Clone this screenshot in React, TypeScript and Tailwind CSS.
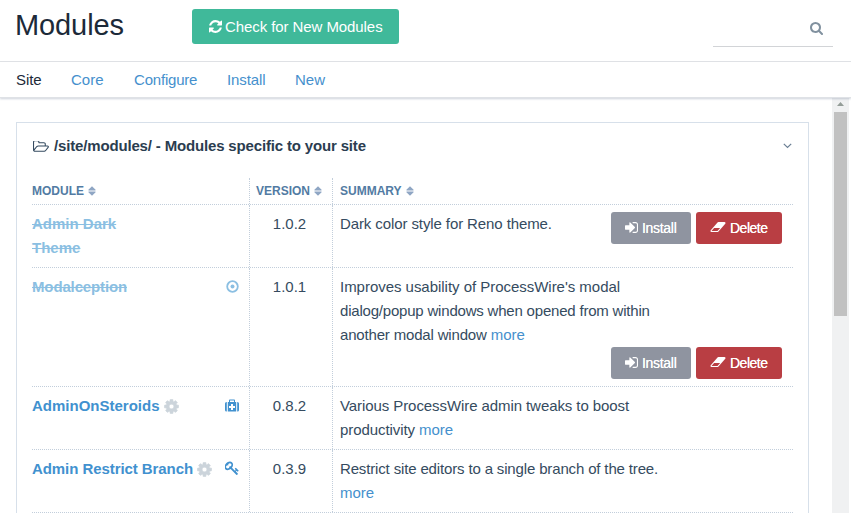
import React from "react";

type IconProps = { className?: string };

const RefreshIcon = ({ className }: IconProps) => (
  <svg viewBox="128 128 1536 1536" className={className} fill="currentColor">
    <path d="M1639 1056q0 5-1 7-64 268-268 434.5t-478 166.5q-146 0-282.5-55t-243.5-157l-129 129q-19 19-45 19t-45-19-19-45v-448q0-26 19-45t45-19h448q26 0 45 19t19 45-19 45l-137 137q71 66 161 102t187 36q134 0 250-65t186-179q11-17 53-117 8-23 30-23h192q13 0 22.5 9.5t9.5 22.5zm25-800v448q0 26-19 45t-45 19h-448q-26 0-45-19t-19-45 19-45l138-138q-148-137-349-137-134 0-250 65t-186 179q-11 17-53 117-8 23-30 23h-199q-13 0-22.5-9.5t-9.5-22.5v-7q65-268 270-434.5t480-166.5q146 0 284 55.5t245 156.5l130-129q19-19 45-19t45 19 19 45z" />
  </svg>
);

const SearchIcon = ({ className }: IconProps) => (
  <svg viewBox="64 128 1664 1664" className={className} fill="currentColor">
    <path d="M1216 832q0-185-131.5-316.5t-316.5-131.5-316.5 131.5-131.5 316.5 131.5 316.5 316.5 131.5 316.5-131.5 131.5-316.5zm512 832q0 52-38 90t-90 38q-54 0-90-38l-343-342q-179 124-399 124-143 0-273.5-55.5t-225-150-150-225-55.5-273.5 55.5-273.5 150-225 225-150 273.5-55.5 273.5 55.5 225 150 150 225 55.5 273.5q0 220-124 399l343 343q37 37 37 90z" />
  </svg>
);

const GearIcon = () => (
  <svg viewBox="80 80 1632 1632" className="mt-px size-[15px] text-[#ccd4db]" fill="currentColor" stroke="currentColor" strokeWidth="70">
    <path d="M1152 896q0-106-75-181t-181-75-181 75-75 181 75 181 181 75 181-75 75-181zm512-109v222q0 12-8 23t-20 13l-185 28q-19 54-39 91 35 50 107 138 10 12 10 25t-9 23q-27 37-99 108t-94 71q-12 0-26-9l-138-108q-44 23-91 38-16 136-29 186-7 28-36 28h-222q-14 0-24.5-8.5t-11.5-21.5l-28-184q-49-16-90-37l-141 107q-10 9-25 9-14 0-25-11-126-114-165-168-7-10-7-23 0-12 8-23 15-21 51-66.5t54-70.5q-27-50-41-99l-183-27q-13-2-21-12.5t-8-23.5v-222q0-12 8-23t19-13l186-28q14-46 39-92-40-57-107-138-10-12-10-24 0-10 9-23 26-36 98.5-107.5t94.5-71.5q13 0 26 10l138 107q44-23 91-38 16-136 29-186 7-28 36-28h222q14 0 24.5 8.5t11.5 21.5l28 184q49 16 90 37l142-107q9-9 24-9 13 0 25 10 129 119 165 170 7 8 7 22 0 12-8 23-15 21-51 66.5t-54 70.5q26 50 41 98l183 28q13 2 21 12.5t8 23.5z" />
  </svg>
);

const FolderIcon = ({ className }: IconProps) => (
  <svg viewBox="64 256 1920 1280" className={className} fill="currentColor">
    <path d="M1845 931q0-35-53-35h-1088q-40 0-85.5 21.5t-71.5 52.5l-294 363q-18 24-18 40 0 35 53 35h1088q40 0 86-22t71-53l294-363q18-22 18-39zm-1141-163h768v-160q0-40-28-68t-68-28h-576q-40 0-68-28t-28-68v-64q0-40-28-68t-68-28h-320q-40 0-68 28t-28 68v853l256-315q44-53 116-87.5t140-34.5zm1269 163q0 62-46 120l-295 363q-43 53-116 87.5t-140 34.5h-1088q-92 0-158-66t-66-158v-960q0-92 66-158t158-66h320q92 0 158 66t66 158v32h544q92 0 158 66t66 158v160h192q54 0 99 24.5t67 70.5q15 32 15 68z" />
  </svg>
);

const SignInIcon = ({ className }: IconProps) => (
  <svg viewBox="128 256 1536 1280" className={className} fill="currentColor">
    <path d="M1312 896q0 26-19 45l-544 544q-19 19-45 19t-45-19-19-45v-288h-448q-26 0-45-19t-19-45v-384q0-26 19-45t45-19h448v-288q0-26 19-45t45-19 45 19l544 544q19 19 19 45zm352-352v704q0 119-84.5 203.5t-203.5 84.5h-320q-13 0-22.5-9.5t-9.5-22.5q0-4-1-20t-.5-26.5 3-23.5 10-19.5 20.5-6.5h320q66 0 113-47t47-113v-704q0-66-47-113t-113-47h-312l-11.5-1-11.5-3-8-5.5-7-9-2-13.5q0-4-1-20t-.5-26.5 3-23.5 10-19.5 20.5-6.5h320q119 0 203.5 84.5t84.5 203.5z" />
  </svg>
);

const EraserIcon = ({ className }: IconProps) => (
  <svg viewBox="64 256 1920 1280" className={className} fill="currentColor">
    <path d="M960 1408l336-384h-768l-336 384h768zm1013-1077q15 34 9.5 71.5t-30.5 65.5l-896 1024q-38 44-96 44h-768q-38 0-69.5-20.5t-47.5-54.5q-15-34-9.5-71.5t30.5-65.5l896-1024q38-44 96-44h768q38 0 69.5 20.5t47.5 54.5z" />
  </svg>
);

const SortIcon = () => (
  <svg viewBox="0 0 8 10" className="h-[10px] w-2 text-[#8fa6c4]" fill="currentColor">
    <path d="M4 0.3 7.6 3.7q.4.8-.5.8H.9Q0 4.500.4 3.700ZM4 9.700.4 6.300Q0 5.500.9 5.500h6.200q.9 0 .5.8Z" />
  </svg>
);

const DotCircleIcon = () => (
  <svg viewBox="0 0 13 13" className="mb-0.5 size-[13px]" fill="none">
    <circle cx="6.500" cy="6.500" r="5.300" stroke="currentColor" strokeWidth="1.800" />
    <circle cx="6.500" cy="6.500" r="2" fill="currentColor" />
  </svg>
);

const MedkitIcon = () => (
  <svg viewBox="0 0 14 13" className="mb-0.5 h-[13px] w-[14px]">
    <path d="M1.800 3v9.500H1.500A1.500 1.500 0 0 1 0 11V4.500A1.500 1.500 0 0 1 1.500 3ZM12.200 3v9.500h.3A1.500 1.500 0 0 0 14 11V4.500A1.500 1.500 0 0 0 12.500 3Z" fill="currentColor" />
    <path d="M2.800 3H4V1.300Q4 .5 4.800.5h4.400q.8 0 .8.8V3h1.200v9.500H2.800ZM5 3h4V1.500H5Z" fill="currentColor" fillRule="evenodd" />
    <path d="M6 5h2v2h2v2H8v2H6V9H4V7h2Z" fill="white" />
  </svg>
);

const KeyIcon = () => (
  <svg viewBox="64 64 1664 1664" className="mb-0.5 size-[14px]" fill="currentColor">
    <path d="M832 512q0-80-56-136t-136-56-136 56-56 136q0 42 19 83-41-19-83-19-80 0-136 56t-56 136 56 136 136 56 136-56 56-136q0-42-19-83 41 19 83 19 80 0 136-56t56-136zm851 704q0 17-49 66t-66 49q-9 0-28.5-16t-36.5-33-38.5-40-24.5-26l-96 96 220 220q28 28 28 68 0 42-39 81t-81 39q-40 0-68-28l-671-671q-176 131-365 131-163 0-265.500-102.500t-102.500-265.500q0-160 95-313t248-248 313-95q163 0 265.500 102.500t102.500 265.500q0 189-131 365l355 355 96-96q-3-3-26-24.500t-40-38.500-33-36.500-16-28.500q0-17 49-66t66-49q13 0 23 10 6 6 46 44.500t82 79.500 86.500 86 73 78 28.500 41z" />
  </svg>
);

const Actions = () => (
  <div className="flex shrink-0 gap-[5px] text-[14px] leading-8 text-white">
    <button className="flex h-8 w-20 items-center rounded-[3px] bg-[#8f94a0] pl-[14px]">
      <SignInIcon className="mr-[4px] mb-0.5 h-[11px] w-[13px]" />
      <span className="whitespace-nowrap tracking-[-0.3px] [text-shadow:0_0_0.5px_white]">Install</span>
    </button>
    <button className="flex h-8 w-[86px] items-center rounded-[3px] bg-[#b93e43] pl-[14px]">
      <EraserIcon className="mr-[4px] mb-0.5 h-[10px] w-[16px]" />
      <span className="whitespace-nowrap tracking-[-0.5px] [text-shadow:0_0_0.5px_white]">Delete</span>
    </button>
  </div>
);

const Row = ({ name, icon, version, children, height }: {
  name: React.ReactNode;
  icon?: React.ReactNode;
  version: string;
  children: React.ReactNode;
  height: string;
}) => (
  <div className={`grid grid-cols-[217px_83px_461px] border-b border-dotted border-[#c2cedb] ${height}`}>
    <div className="flex justify-between pt-[7px] pr-[10px] font-bold text-[#4191cf]">
      <div className="whitespace-nowrap">{name}</div>
      {icon && <div className="flex h-6 items-center">{icon}</div>}
    </div>
    <div className="border-l border-dotted border-[#c2cedb] pt-[7px] pr-[3px] text-center">{version}</div>
    <div className="border-l border-dotted border-[#c2cedb] pt-[7px] pr-[11px] pl-[7px]">{children}</div>
  </div>
);

const Line = ({ children, more, className = "" }: { children?: React.ReactNode; more?: boolean; className?: string }) => (
  <div className={`flex h-6 gap-1 whitespace-nowrap ${className}`}>
    {children && <span>{children}</span>}
    {more && <a className="tracking-normal text-[#4590cd]">more</a>}
  </div>
);

export default function App() {
  return (
    <div className="flex h-[513px] w-[851px] flex-col overflow-hidden bg-white text-[15px] leading-6 text-[#354b60] [font-family:'Liberation_Sans',Arial,sans-serif]">
      <header className="flex h-[62px] w-full shrink-0 items-start border-b border-[#e2e4e7] pr-[18px] pl-[15px]">
        <h1 className="mt-[6px] w-[177px] text-[29px] leading-[38px] tracking-[-0.1px] text-[#1c2a39]">Modules</h1>
        <button className="mt-[9px] flex h-[35px] w-[207px] items-center rounded-[3px] bg-[#40b99a] pl-[17px] text-white">
          <RefreshIcon className="mr-[3px] size-[13px]" />
          <span className="whitespace-nowrap tracking-[-0.08px]">Check for New Modules</span>
        </button>
        <div className="mt-[9px] ml-auto flex h-[38px] w-[120px] items-center justify-end border-b border-[#d2d4d7] pr-[10px] text-[#81919f]">
          <SearchIcon className="mt-0.5 size-[13px]" />
        </div>
      </header>
      <nav className="relative z-10 flex h-9 shrink-0 items-center border-b border-[#dfe2e6] pl-4 text-[#4590cd] shadow-[0_1px_2px_rgba(60,80,110,0.25)]">
        <a className="w-[55px] tracking-[-0.1px] text-[#1c2a39]">Site</a>
        <a className="w-[63px]">Core</a>
        <a className="w-[93px] tracking-[-0.2px]">Configure</a>
        <a className="w-[68px] tracking-[-0.1px]">Install</a>
        <a>New</a>
      </nav>
      <div className="flex min-h-0 flex-1">
        <main className="w-[832px] shrink-0 overflow-hidden pt-6 pl-4">
          <section className="h-[450px] w-[793px] border border-[#d7e0ea] px-[15px]">
            <div className="flex h-[55px] items-center pb-[9px] pl-px">
              <FolderIcon className="mt-px mr-[5px] h-[11px] w-4 text-[#354b60]" />
              <h2 className="text-[15px] font-bold tracking-[-0.16px] text-[#2b3d50]">/site/modules/ - Modules specific to your site</h2>
              <svg viewBox="0 0 9 6" className="mr-px ml-auto h-[6px] w-[9px]" fill="none" stroke="#6b7f94">
                <path d="m.8.8 3.700 3.700L8.200.8" strokeWidth="1.200" />
              </svg>
            </div>
            <div>
              <div className="grid h-[27px] grid-cols-[217px_83px_461px] border-b border-dotted border-[#c2cedb] text-[12px] leading-[25px] font-bold text-[#527ba3]">
                <div className="flex items-center gap-1"><span>MODULE</span><SortIcon /></div>
                <div className="flex items-center gap-1 border-l border-dotted border-[#c2cedb] pl-[6px]"><span>VERSION</span><SortIcon /></div>
                <div className="flex items-center gap-1 border-l border-dotted border-[#c2cedb] pl-[7px]"><span>SUMMARY</span><SortIcon /></div>
              </div>
              <Row height="h-[63px]" version="1.0.2"
                name={<div className="w-[100px] whitespace-normal text-[#8bbfe2] line-through">Admin Dark Theme</div>}>
                <div className="flex justify-between">
                  <Line className="tracking-[-0.1px]">Dark color style for Reno theme.</Line>
                  <Actions />
                </div>
              </Row>
              <Row height="h-[119px]" version="1.0.1"
                name={<div className="tracking-[-0.14px] text-[#8bbfe2] line-through">Modalception</div>}
                icon={<span className="text-[#8bbfe2]"><DotCircleIcon /></span>}>
                <Line className="tracking-[-0.03px]">Improves usability of ProcessWire's modal</Line>
                <Line className="tracking-[-0.2px]">dialog/popup windows when opened from within</Line>
                <Line className="tracking-[-0.17px]" more>another modal window</Line>
                <div className="flex justify-end"><Actions /></div>
              </Row>
              <Row height="h-[63px]" version="0.8.2"
                name={<div className="flex items-center gap-1"><span>AdminOnSteroids</span><GearIcon /></div>}
                icon={<MedkitIcon />}>
                <Line className="tracking-[-0.08px]">Various ProcessWire admin tweaks to boost</Line>
                <Line className="tracking-[-0.08px]" more>productivity</Line>
              </Row>
              <Row height="h-[63px]" version="0.3.9"
                name={<div className="flex items-center gap-1"><span className="tracking-[-0.07px]">Admin Restrict Branch</span><GearIcon /></div>}
                icon={<KeyIcon />}>
                <Line className="tracking-[-0.15px]">Restrict site editors to a single branch of the tree.</Line>
                <Line more />
              </Row>
            </div>
          </section>
        </main>
        <div className="flex w-[17px] flex-col items-center bg-[#f0f1f2]">
          <svg viewBox="0 0 7 4" className="mt-1 mb-[6px] h-1 w-[7px]" fill="#949d98"><path d="M3.500 0 7 4H0Z" /></svg>
          <div className="h-[204px] w-[13px] bg-[#c1c1c1]" />
        </div>
      </div>
    </div>
  );
}
